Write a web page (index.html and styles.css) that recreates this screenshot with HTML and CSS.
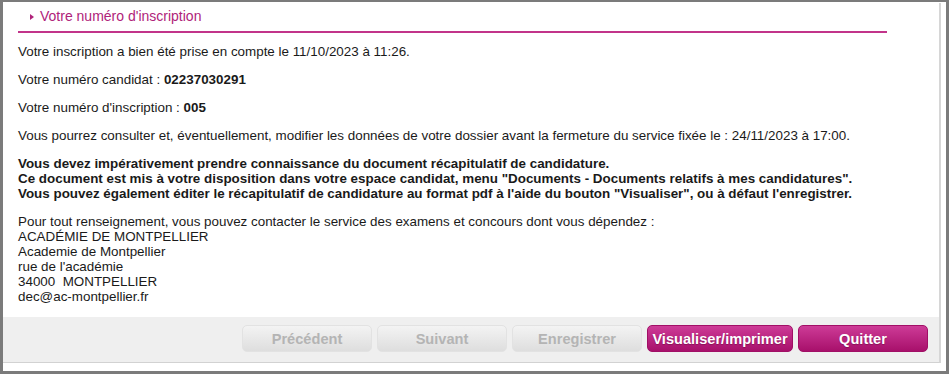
FILE: index.html
```html
<!DOCTYPE html>
<html lang="fr">
<head>
<meta charset="utf-8">
<title>Votre numéro d'inscription</title>
<link rel="stylesheet" href="styles.css">
</head>
<body>
<div class="frame">
  <div class="panel">
    <div class="content">
      <h2 class="title"><span class="arrow"></span>Votre numéro d'inscription</h2>
      <p>Votre inscription a bien été prise en compte le 11/10/2023 à 11:26.</p>
      <p>Votre numéro candidat : <b>02237030291</b></p>
      <p>Votre numéro d'inscription : <b>005</b></p>
      <p>Vous pourrez consulter et, éventuellement, modifier les données de votre dossier avant la fermeture du service fixée le : 24/11/2023 à 17:00.</p>
      <p class="strong">Vous devez impérativement prendre connaissance du document récapitulatif de candidature.<br>Ce document est mis à votre disposition dans votre espace candidat, menu "Documents - Documents relatifs à mes candidatures".<br>Vous pouvez également éditer le récapitulatif de candidature au format pdf à l'aide du bouton "Visualiser", ou à défaut l'enregistrer.</p>
      <p>Pour tout renseignement, vous pouvez contacter le service des examens et concours dont vous dépendez :<br>ACADÉMIE DE MONTPELLIER<br>Academie de Montpellier<br>rue de l'académie<br>34000&nbsp; MONTPELLIER<br>dec@ac-montpellier.fr</p>
    </div>
    <div class="footer">
      <button class="btn btn-off" disabled>Précédent</button>
      <button class="btn btn-off" disabled>Suivant</button>
      <button class="btn btn-off" disabled>Enregistrer</button>
      <button class="btn btn-on btn-wide">Visualiser/imprimer</button>
      <button class="btn btn-on">Quitter</button>
    </div>
  </div>
</div>
</body>
</html>
```

FILE: styles.css
```css
html, body {
  margin: 0;
  padding: 0;
  background: #ffffff;
}

.frame {
  box-sizing: border-box;
  width: 949px;
  height: 374px;
  border: 3px solid #7b7b7b;
  border-top-width: 2px;
  padding: 1px 5px 8px 0;
  background: #ffffff;
  display: flex;
}

.panel {
  flex: 1;
  display: flex;
  flex-direction: column;
  border-right: 2px solid #d6d6d6;
  border-bottom: 1px solid #d2d2d2;
  font-family: "Liberation Sans", Arial, sans-serif;
  font-size: 13.4px;
  color: #1a1a1a;
}

.content {
  flex: 1;
  padding: 0 0 0 15px;
}

.title {
  margin: 0 52px 0 0;
  padding: 6px 0 7px 12px;
  font-size: 14px;
  font-weight: normal;
  line-height: 15px;
  color: #b0237a;
  border-bottom: 2px solid #c2348a;
  display: flex;
  align-items: center;
}

.arrow {
  width: 0;
  height: 0;
  border-top: 3px solid transparent;
  border-bottom: 3px solid transparent;
  border-left: 4px solid #b0237a;
  margin-right: 6px;
}

.content p {
  margin: 11px 0 13px 0;
  line-height: 15px;
}

.content p.strong {
  font-weight: bold;
}

.footer {
  height: 50px;
  background: #efefef;
  display: flex;
  justify-content: flex-end;
  align-items: center;
  gap: 5px;
  padding: 0 11px 2px 0;
}

.btn {
  box-sizing: border-box;
  width: 130px;
  height: 27px;
  border-radius: 5px;
  font-family: "Liberation Sans", Arial, sans-serif;
  font-size: 14.6px;
  font-weight: bold;
  padding: 0;
  cursor: pointer;
}

.btn-wide {
  width: 146px;
}

.btn-off {
  border: 1px solid #e2e2e2;
  background: linear-gradient(#f3f3f3, #dedede);
  color: #b4b4b4;
}

.btn-on {
  border: 1px solid #a10f66;
  background: linear-gradient(#cd3b97, #a8106b);
  color: #ffffff;
  text-shadow: 0 1px 1px rgba(80, 0, 40, 0.4);
}
```
